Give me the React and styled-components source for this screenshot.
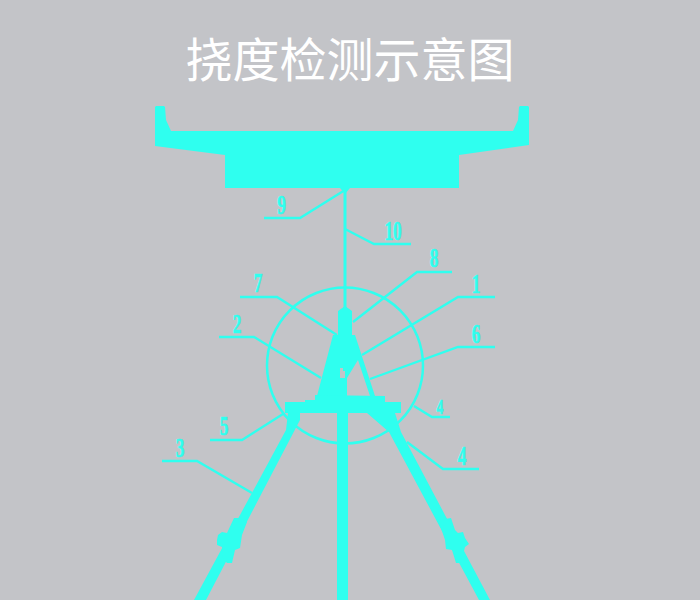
import React from 'react';
import styled, { createGlobalStyle } from 'styled-components';

const CYAN = '#2fffef';

const leaders = [
  '345,190 300,218 264,218',
  '345,229 374,244 411,244',
  '353,322 417,272 452,272',
  '337,335 277,297 240,297',
  '362,355 458,297 495,297',
  '321,378 254,337 219,337',
  '370,379 458,347 495,347',
  '414,406 432,417 450,417',
  '283,414 242,440 210,440',
  '407,442 443,469 479,469',
  '252,493 197,461 162,461',
];

const labels = [
  { text: '9', x: 281.5, y: 214 },
  { text: '10', x: 393, y: 240 },
  { text: '8', x: 434, y: 267 },
  { text: '7', x: 258, y: 292 },
  { text: '1', x: 476, y: 293 },
  { text: '2', x: 237, y: 333 },
  { text: '6', x: 476, y: 343 },
  { text: '4', x: 440, y: 414, small: true },
  { text: '5', x: 224, y: 435 },
  { text: '4', x: 462, y: 465 },
  { text: '3', x: 180, y: 457 },
];

const shapes = [
  // beam
  '155,107 156,106 164,106 165,107 166,120 171,131 513,131 518,120 519,107 520,106 528,106 529,107 529,145 459,155 459,188 225,188 225,155 155,146',
  // anchor under the beam
  '340,188 350,188 345,194',
  // clamp head and triangle frame
  '345,306 352,311 352,335 355,335 375,396 370,396 358,360 347,378 347,396 317,396 333,335 338,335 338,311',
  // base plate
  '315,395 385,396 385,402 401,402 401,413 285,413 285,402 305,402 305,400 315,400',
  // centre post
  '337,413 348,413 348,600 337,600',
  // left leg
  '288,413 300,413 300,420 206,600 194,600 286,430',
  // right leg
  '367,413 395,413 401,432 490,600 479,600 389,432',
  // left turnbuckle
  '234,518 241,518 247,522 242,535 240,548 235,550 232,563 227,563 223,558 222,547 217,545 217,540 218,535 222,532 227,533',
  // right turnbuckle
  '445,519 451,518 455,530 458,533 463,532 465,538 469,544 465,547 463,555 460,563 456,563 452,550 446,549 445,540 438,519',
];

const GlobalStyle = createGlobalStyle`
  html, body {
    margin: 0;
    padding: 0;
    background: #c3c4c8;
  }
`;

const Page = styled.div`
  width: 700px;
  height: 600px;
  overflow: hidden;
  display: flex;
  flex-direction: column;
  background: #c3c4c8;
`;

const Title = styled.h1`
  height: 90px;
  margin: 0;
  padding-top: 24px;
  box-sizing: border-box;
  text-align: center;
  font-family: "Noto Sans CJK SC", sans-serif;
  font-size: 47px;
  line-height: 66px;
  font-weight: 400;
  color: #ffffff;
`;

const Drawing = styled.svg`
  display: block;
  width: 700px;
  height: 510px;
`;

const Leader = styled.polyline`
  fill: none;
  stroke: ${CYAN};
  stroke-width: ${props => props.$width || 2.3};
`;

const Ring = styled.circle`
  fill: none;
  stroke: ${CYAN};
  stroke-width: 2.5;
`;

const Part = styled.polygon`
  fill: ${CYAN};
`;

const Notch = styled.polygon`
  fill: #c3c4c8;
`;

const Label = styled.text`
  fill: ${CYAN};
  stroke: ${CYAN};
  stroke-width: 0.6;
  font-family: "Liberation Serif", serif;
  font-weight: 700;
  font-size: ${props => (props.$small ? 21 : 26.5)}px;
  text-anchor: middle;
`;

export default function App() {
  return (
    <Page>
      <GlobalStyle />
      <Title>挠度检测示意图</Title>
      <Drawing viewBox="0 90 700 510">
        <Ring cx="345" cy="365.5" r="78" />
        {leaders.map(points => <Leader key={points} points={points} />)}
        <Leader $width={3} points="345,188 345,310" />
        {shapes.map(points => <Part key={points} points={points} />)}
        <Notch points="340,368 343,368 343,371 345,371 345,378 340,378" />
        {labels.map(({ text, x, y, small }) => (
          <Label key={`${text}-${x}`} $small={small} transform={`translate(${x} ${y}) scale(0.65 1)`}>
            {text}
          </Label>
        ))}
      </Drawing>
    </Page>
  );
}
